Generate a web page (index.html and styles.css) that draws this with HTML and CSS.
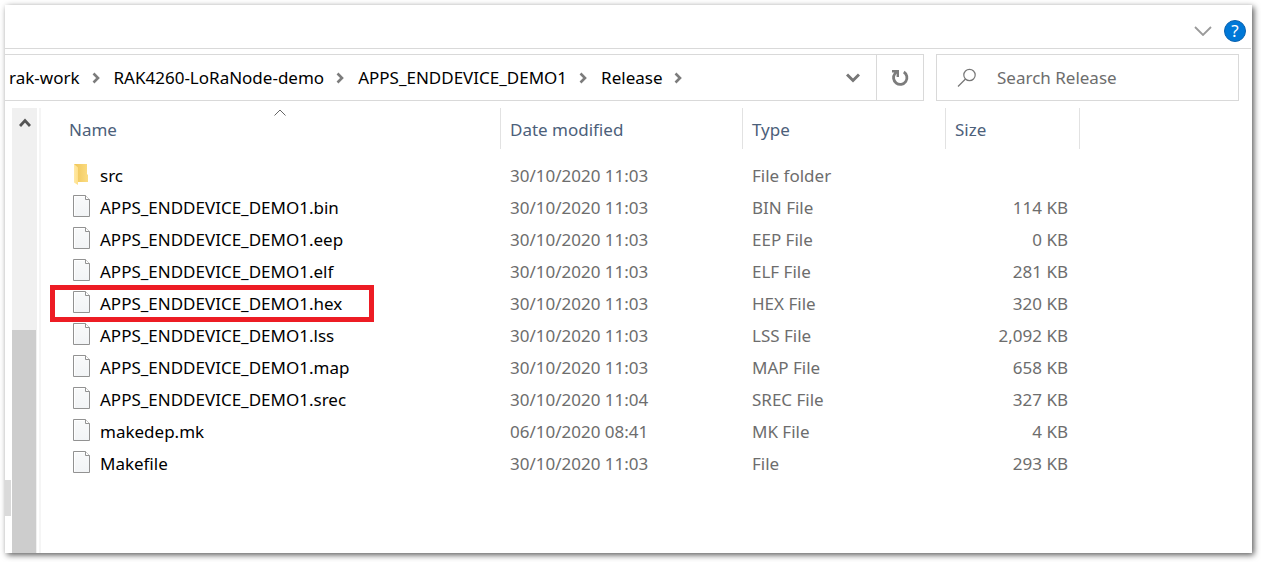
FILE: index.html
```html
<!DOCTYPE html>
<html lang="en">
<head>
<meta charset="utf-8">
<title>Release</title>
<link rel="stylesheet" href="styles.css">
</head>
<body>
<svg class="defs" aria-hidden="true">
  <defs>
    <linearGradient id="paper" x1="0" y1="0" x2="0" y2="1"><stop offset="0" stop-color="#f9fafb"/><stop offset="1" stop-color="#f2f4f6"/></linearGradient>
    <linearGradient id="flap" x1="0" y1="0" x2="1" y2="0"><stop offset="0" stop-color="#ffe9a6"/><stop offset="1" stop-color="#ffe08a"/></linearGradient>
    <linearGradient id="back" x1="0" y1="0" x2="1" y2="0"><stop offset="0" stop-color="#efc559"/><stop offset="1" stop-color="#fbdc82"/></linearGradient>
    <symbol id="file" viewBox="0 0 18 22"><path d="M.5.5h12l4 4v17H.5z" fill="url(#paper)" stroke="#929292"/><path d="M1.500 20.500V1.500H12" fill="none" stroke="#fff"/><path d="M12.500.5v4h4" fill="#fff" stroke="#929292"/></symbol>
    <symbol id="folder" viewBox="0 0 18 22"><path d="M1 1h13v10l1 1v7H4z" fill="url(#back)"/><path d="M1 1l4 3.500V22l-4-2.500z" fill="url(#flap)"/></symbol>
    <symbol id="crumb" viewBox="0 0 8 12"><path d="M1.500 1.500L6 6l-4.500 4.500" fill="none" stroke="#7c7c7c" stroke-width="2.600"/></symbol>
  </defs>
</svg>
<main class="window">
  <header class="ribbon">
    <button class="icon-button" type="button" aria-label="Expand the ribbon"><svg width="18" height="10" viewBox="0 0 18 10"><path d="M1 1l8 8 8-8" fill="none" stroke="#9a9a9a" stroke-width="1.800"/></svg></button>
    <button class="help" type="button" aria-label="Help">?</button>
  </header>
  <div class="location">
    <nav class="address" aria-label="Address">
      <a class="crumb" href="#">rak-work</a><svg class="arrow"><use href="#crumb"/></svg>
      <a class="crumb" href="#">RAK4260-LoRaNode-demo</a><svg class="arrow"><use href="#crumb"/></svg>
      <a class="crumb" href="#">APPS_ENDDEVICE_DEMO1</a><svg class="arrow"><use href="#crumb"/></svg>
      <a class="crumb" href="#">Release</a><svg class="arrow"><use href="#crumb"/></svg>
      <button class="icon-button history" type="button" aria-label="Previous locations"><svg width="14" height="10" viewBox="0 0 14 10"><path d="M1 1.500l6 6 6-6" fill="none" stroke="#777" stroke-width="3"/></svg></button>
      <button class="icon-button refresh" type="button" aria-label="Refresh"><svg width="18" height="18" viewBox="0 0 18 18"><path d="M12.800 3A6.700 6.700 0 1 1 4 4.500L6 2.500" fill="none" stroke="#7c7c7c" stroke-width="2.800"/><path d="M1 2.200h5.800v5.800" fill="none" stroke="#7c7c7c" stroke-width="2.400"/></svg></button>
    </nav>
    <label class="search">
      <svg width="20" height="20" viewBox="0 0 20 20"><circle cx="12.500" cy="7" r="5.700" fill="none" stroke="#777" stroke-width="1.200"/><path d="M8.500 11L1 18.500" stroke="#777" stroke-width="1.300"/></svg>
      <input type="text" placeholder="Search Release" aria-label="Search Release">
    </label>
  </div>
  <div class="body">
    <div class="edge"><div class="edge-thumb"></div></div>
    <div class="scrollbar">
      <button class="icon-button scroll-up" type="button" aria-label="Scroll up"><svg width="12" height="10" viewBox="0 0 12 10"><path d="M1 8l5-5.500L11 8" fill="none" stroke="#555" stroke-width="2.800"/></svg></button>
      <div class="thumb"></div>
    </div>
    <div class="splitter"></div>
    <table class="files">
      <colgroup><col class="c-name"><col class="c-date"><col class="c-type"><col class="c-size"><col></colgroup>
      <thead>
        <tr><th class="sorted">Name<svg class="sort" width="12" height="7" viewBox="0 0 12 7"><path d="M.5 6.500L6 1l5.500 5.500" fill="none" stroke="#666"/></svg></th><th>Date modified</th><th>Type</th><th>Size</th><th class="rest"></th></tr>
      </thead>
      <tbody>
        <tr><td><span class="name"><svg><use href="#folder"/></svg>src</span></td><td>30/10/2020 11:03</td><td>File folder</td><td></td></tr>
        <tr><td><span class="name"><svg><use href="#file"/></svg>APPS_ENDDEVICE_DEMO1.bin</span></td><td>30/10/2020 11:03</td><td>BIN File</td><td class="size">114 KB</td></tr>
        <tr><td><span class="name"><svg><use href="#file"/></svg>APPS_ENDDEVICE_DEMO1.eep</span></td><td>30/10/2020 11:03</td><td>EEP File</td><td class="size">0 KB</td></tr>
        <tr><td><span class="name"><svg><use href="#file"/></svg>APPS_ENDDEVICE_DEMO1.elf</span></td><td>30/10/2020 11:03</td><td>ELF File</td><td class="size">281 KB</td></tr>
        <tr><td><span class="name marked"><svg><use href="#file"/></svg>APPS_ENDDEVICE_DEMO1.hex</span></td><td>30/10/2020 11:03</td><td>HEX File</td><td class="size">320 KB</td></tr>
        <tr><td><span class="name"><svg><use href="#file"/></svg>APPS_ENDDEVICE_DEMO1.lss</span></td><td>30/10/2020 11:03</td><td>LSS File</td><td class="size">2,092 KB</td></tr>
        <tr><td><span class="name"><svg><use href="#file"/></svg>APPS_ENDDEVICE_DEMO1.map</span></td><td>30/10/2020 11:03</td><td>MAP File</td><td class="size">658 KB</td></tr>
        <tr><td><span class="name"><svg><use href="#file"/></svg>APPS_ENDDEVICE_DEMO1.srec</span></td><td>30/10/2020 11:04</td><td>SREC File</td><td class="size">327 KB</td></tr>
        <tr><td><span class="name"><svg><use href="#file"/></svg>makedep.mk</span></td><td>06/10/2020 08:41</td><td>MK File</td><td class="size">4 KB</td></tr>
        <tr><td><span class="name"><svg><use href="#file"/></svg>Makefile</span></td><td>30/10/2020 11:03</td><td>File</td><td class="size">293 KB</td></tr>
      </tbody>
    </table>
  </div>
</main>
</body>
</html>
```

FILE: styles.css
```css
* { box-sizing: border-box; }

body {
  margin: 0;
  padding: 5px 9px 9px 5px;
  min-height: 100vh;
  display: flex;
  background: #fff;
  font: 17px/24px "Noto Sans", "Open Sans", sans-serif;
  color: #000;
}

.defs { position: absolute; width: 0; height: 0; }

.window {
  flex: 1;
  min-width: 0;
  display: flex;
  flex-direction: column;
  background: #fff;
  box-shadow: 2px 2px 6px rgba(0, 0, 0, .65);
}

button { font: inherit; padding: 0; border: 0; background: none; }
svg { display: block; flex: none; }

.icon-button { display: flex; align-items: center; justify-content: center; }

.ribbon {
  height: 44px;
  padding: 8px 5px 0 0;
  margin-right: 1px;
  display: flex;
  align-items: center;
  justify-content: flex-end;
  gap: 12px;
  border-bottom: 1px solid #d9d9d9;
}

.help {
  width: 22px;
  height: 22px;
  border: 1px solid #0b62ae;
  border-radius: 50%;
  background: #0078d7;
  color: #fff;
  font-size: 17px;
  line-height: 20px;
}

.location { display: flex; gap: 12px; padding: 5px 13px 0 0; }

.address {
  flex: 1;
  height: 47px;
  padding-left: 4px;
  display: flex;
  align-items: center;
  border: 1px solid #d9d9d9;
  border-left: 0;
}

.crumb { color: #000; text-decoration: none; }
.arrow { width: 8px; height: 12px; margin: 0 14px 0 12px; }
.history { width: 46px; height: 45px; margin-left: auto; }
.refresh { width: 47px; height: 45px; border-left: 1px solid #d9d9d9; }

.search {
  width: 303px;
  display: flex;
  align-items: center;
  padding-left: 20px;
  gap: 20px;
  border: 1px solid #d9d9d9;
}

.search input {
  flex: 1;
  min-width: 0;
  padding: 0;
  border: 0;
  outline: 0;
  background: none;
  font: inherit;
}

.search input::placeholder { color: #6d6d6d; opacity: 1; }

.body { flex: 1; display: flex; padding-top: 7px; }

.edge { width: 7px; display: flex; flex-direction: column; justify-content: flex-end; padding-bottom: 37px; }
.edge-thumb { width: 6px; height: 36px; background: #dadada; }

.scrollbar { width: 25px; display: flex; flex-direction: column; background: #f0f0f0; }
.scroll-up { width: 25px; height: 30px; flex: none; }
.thumb { width: 24px; flex: 1; margin-top: 192px; background: #cdcdcd; }
.splitter { width: 2px; margin-left: 2px; background: #f5f5f5; }

.files {
  flex: 1;
  align-self: flex-start;
  table-layout: fixed;
  border-collapse: separate;
  border-spacing: 0;
  color: #6d6d6d;
}

.c-name { width: 460px; }
.c-date { width: 242px; }
.c-type { width: 203px; }
.c-size { width: 134px; }

.files th {
  position: relative;
  height: 41px;
  padding: 2px 0 0 9px;
  border-right: 1px solid #e2e2e2;
  text-align: left;
  font-weight: 400;
  color: #4c607a;
}

.files th.sorted { padding-left: 28px; }
.files th.rest { border-right: 0; }
.sort { position: absolute; top: 1px; left: 233px; }

.files tbody::before { content: ""; display: block; height: 11px; }
.files td { height: 32px; padding: 0 0 0 9px; }
.files td.size { text-align: right; padding: 0 12px 0 0; }

.name {
  position: relative;
  display: flex;
  align-items: center;
  width: 324px;
  height: 32px;
  padding-left: 23px;
  gap: 9px;
  color: #000;
}

.name svg { width: 18px; height: 22px; margin-bottom: 4px; }

.marked::after {
  content: "";
  position: absolute;
  inset: -3px 0 -2px 0;
  border: 5px solid #ed1c24;
}
```
